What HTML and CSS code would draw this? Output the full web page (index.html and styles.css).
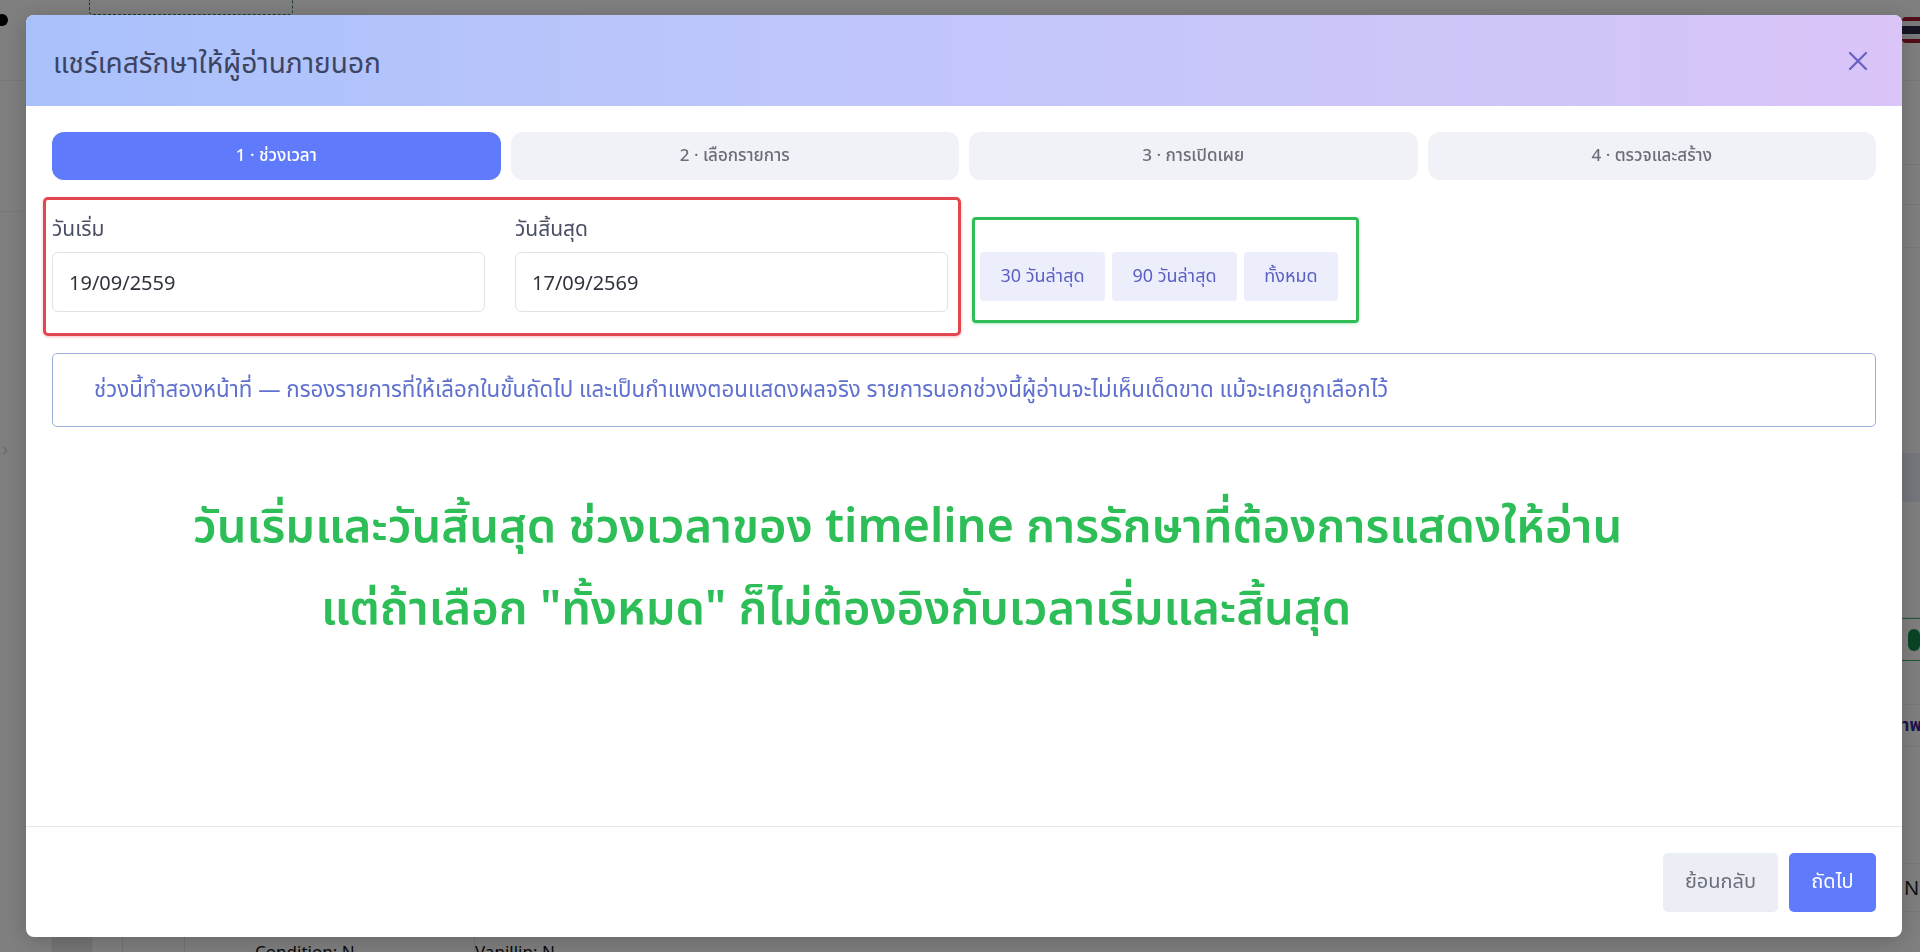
FILE: index.html
```html
<!DOCTYPE html>
<html lang="th">
<head>
<meta charset="utf-8">
<title>แชร์เคสรักษาให้ผู้อ่านภายนอก</title>
<link rel="stylesheet" href="styles.css">
</head>
<body>
<div class="page">
  <div class="page-top">
    <span class="dot"></span>
    <span class="dashed-box"></span>
    <span class="spacer"></span>
    <span class="flag"></span>
  </div>
  <div class="page-main">
    <div class="side-left">
      <span class="chev">›</span>
    </div>
    <div class="page-center"></div>
    <div class="side-right">
      <div class="r-row r1"></div>
      <div class="r-row r2"></div>
      <div class="r-row r3"></div>
      <div class="r-row r4"></div>
      <div class="r-row r5"><span class="g-icon"></span></div>
      <div class="r-gap r6"></div>
      <div class="r-row r7"><span class="p-text">าพ</span></div>
      <div class="r-gap r8"></div>
      <div class="r-row r9"><span class="n-text">N</span></div>
    </div>
  </div>
  <div class="page-bottom">
    <span class="cell c1"></span>
    <span class="cell c2"></span>
    <span class="cell c3"></span>
    <span class="cell c4"></span>
    <span class="cell c5">Condition: N</span>
    <span class="cell c6">Vanillin: N</span>
  </div>
</div>

<div class="overlay"></div>

<div class="modal">
  <div class="modal-header">
    <h1 class="modal-title">แชร์เคสรักษาให้ผู้อ่านภายนอก</h1>
    <button class="close-btn" aria-label="ปิด">
      <svg viewBox="0 0 20 20" width="20" height="20"><path d="M2 2 L18 18 M18 2 L2 18" stroke="#6a63c2" stroke-width="2.4" stroke-linecap="round" fill="none"/></svg>
    </button>
  </div>
  <div class="modal-body">
    <div class="steps">
      <div class="step active">1 · ช่วงเวลา</div>
      <div class="step">2 · เลือกรายการ</div>
      <div class="step">3 · การเปิดเผย</div>
      <div class="step">4 · ตรวจและสร้าง</div>
    </div>
    <div class="range-row">
      <div class="annot-red">
        <div class="field">
          <label class="field-label">วันเริ่ม</label>
          <div class="input">19/09/2559</div>
        </div>
        <div class="field">
          <label class="field-label">วันสิ้นสุด</label>
          <div class="input">17/09/2569</div>
        </div>
      </div>
      <div class="annot-green">
        <button class="quick">30 วันล่าสุด</button>
        <button class="quick">90 วันล่าสุด</button>
        <button class="quick q3">ทั้งหมด</button>
      </div>
    </div>
    <div class="info">ช่วงนี้ทำสองหน้าที่ — กรองรายการที่ให้เลือกในขั้นถัดไป และเป็นกำแพงตอนแสดงผลจริง รายการนอกช่วงนี้ผู้อ่านจะไม่เห็นเด็ดขาด แม้จะเคยถูกเลือกไว้</div>
    <div class="annot-text">
      <div class="line l1">วันเริ่มและวันสิ้นสุด ช่วงเวลาของ timeline การรักษาที่ต้องการแสดงให้อ่าน</div>
      <div class="line l2">แต่ถ้าเลือก "ทั้งหมด" ก็ไม่ต้องอิงกับเวลาเริ่มและสิ้นสุด</div>
    </div>
  </div>
  <div class="modal-footer">
    <button class="btn btn-back">ย้อนกลับ</button>
    <button class="btn btn-next">ถัดไป</button>
  </div>
</div>
</body>
</html>
```

FILE: styles.css
```css
* { box-sizing: border-box; }
html, body { margin: 0; padding: 0; }
body {
  width: 1920px;
  height: 952px;
  overflow: hidden;
  font-family: "Noto Sans", "Noto Sans Thai", "Noto Sans Thai UI", sans-serif;
  background: #fff;
}

/* ---------- background page (dimmed) ---------- */
.page { width: 1920px; height: 952px; display: flex; flex-direction: column; background: #fff; }
.page-top { height: 81px; display: flex; align-items: flex-start; border-bottom: 1px solid #f2f2f2; flex: none; }
.dot { width: 12px; height: 12px; border-radius: 50%; background: #000; margin: 14px 0 0 -4px; }
.dashed-box { width: 204px; height: 15px; margin-left: 81px; border: 1px dashed #3a7a50; border-top: 0; border-radius: 0 0 4px 4px; }
.spacer { flex: 1; }
.flag { width: 30px; height: 26px; margin: 17px -12px 0 0; border-radius: 4px;
  background: linear-gradient(#a51931 0 17%, #f4f5f8 17% 33%, #2d2a4a 33% 67%, #f4f5f8 67% 83%, #a51931 83%); }
.page-main { flex: 1; display: flex; }
.side-left { width: 60px; padding-top: 354px; background: linear-gradient(#fff 0 130px, #f3f3f3 130px 131px, #fff 131px); }
.chev { font-size: 20px; color: #d8d8d8; margin-left: 2px; }
.page-center { flex: 1; }
.side-right { width: 80px; display: flex; flex-direction: column; }
.r-row { border-bottom: 1px solid #f0f0f0; display: flex; align-items: center; flex: none; }
.r-gap { flex: none; }
.r1 { height: 84px; }
.r2 { height: 40px; }
.r3 { height: 43px; }
.r4 { height: 370px; background: linear-gradient(#fff 0 205px, #eceef8 205px 254px, #fff 254px); }
.r5 { height: 43px; border-top: 1px solid #3fae6a; border-bottom: 1px solid #3fae6a; }
.g-icon { width: 24px; height: 22px; border-radius: 6px; background: #128a4a; margin-left: 68px; }
.r6 { height: 43px; }
.r7 { height: 43px; border-top: 1px solid #eee; }
.p-text { color: #3a2a9a; font-weight: 700; font-size: 17px; margin-left: 62px; }
.r8 { height: 116px; }
.r9 { height: 49px; border-top: 1px solid #eee; }
.n-text { color: #222; font-size: 20px; margin-left: 64px; }
.page-bottom { height: 15px; display: flex; flex: none; }
.cell { height: 15px; border-right: 1px solid #e5e5e5; }
.c1 { width: 53px; }
.c2 { width: 39px; background: #ececec; }
.c3 { width: 31px; }
.c4 { width: 62px; }
.c5 { width: 290px; padding-left: 70px; font-size: 17px; line-height: 30px; color: #111; overflow: hidden; }
.c6 { width: 200px; font-size: 17px; line-height: 30px; color: #111; overflow: hidden; border: 0; }

.overlay { position: fixed; inset: 0; background: rgba(0, 0, 0, 0.5); }

/* ---------- modal ---------- */
.modal {
  position: fixed;
  left: 26px;
  top: 15px;
  width: 1876px;
  height: 922px;
  background: #fff;
  border-radius: 8px;
  overflow: hidden;
  display: flex;
  flex-direction: column;
  box-shadow: 0 4px 24px rgba(0,0,0,0.2);
}
.modal-header {
  height: 91px;
  flex: none;
  display: flex;
  align-items: center;
  justify-content: space-between;
  padding: 0 34px 0 27px;
  background: linear-gradient(90deg, #a9c1fb 0%, #bec6fb 40%, #cdc6f9 75%, #dac4f8 100%);
}
.modal-title { margin: 0; font-size: 28px; font-weight: 400; color: #3d4462; line-height: 1.2; padding-top: 4px; }
.close-btn { background: none; border: 0; padding: 0; width: 20px; height: 20px; display: flex; cursor: pointer; }

.modal-body { flex: 1; padding: 26px 26px 0; }
.steps { display: grid; grid-template-columns: repeat(4, 1fr); gap: 10px; }
.step {
  height: 48px;
  border-radius: 12px;
  background: #f1f2f8;
  color: #6b6e79;
  font-size: 17px;
  font-weight: 500;
  display: flex;
  align-items: center;
  justify-content: center;
}
.step.active { background: #5f7bfb; color: #fff; }

.range-row { display: flex; align-items: flex-start; margin-top: 17px; gap: 11px; }
.annot-red {
  margin-left: -9px;
  border: 3px solid #e2474d;
  border-radius: 5px;
  padding: 13px 10px 21px 6px;
  display: flex;
  gap: 30px;
  box-shadow: 0 1px 3px rgba(226,71,77,0.35);
}
.field { width: 433px; display: flex; flex-direction: column; }
.field-label { font-size: 21px; color: #4a4f66; line-height: 30px; margin-bottom: 9px; }
.input {
  height: 60px;
  border: 1px solid #dfe1e8;
  border-radius: 6px;
  padding: 0 16px;
  display: flex;
  align-items: center;
  font-size: 20px;
  color: #30333d;
}
.annot-green {
  margin-top: 20px;
  border: 3px solid #2fbd58;
  border-radius: 4px;
  padding: 32px 18px 19px 5px;
  display: flex;
  gap: 7px;
  box-shadow: 0 1px 3px rgba(47,189,88,0.35);
}
.quick {
  height: 49px;
  width: 125px;
  border: 0;
  border-radius: 4px;
  background: #eceefb;
  color: #5a5fc4;
  font-family: inherit;
  font-size: 18px;
  padding: 0;
}
.quick.q3 { width: 94px; }

.info {
  margin-top: 17px;
  height: 74px;
  border: 1px solid #9daedb;
  border-radius: 5px;
  padding: 0 0 0 41px;
  display: flex;
  align-items: center;
  font-size: 22.3px;
  color: #5f70cf;
  white-space: nowrap;
}

.annot-text { margin-top: 56px; color: #2dbe57; font-size: 47px; font-weight: 600; }
.line { line-height: 82px; white-space: nowrap; }
.l1 { margin-left: 141px; }
.l2 { margin-left: 269px; }

.modal-footer {
  height: 111px;
  flex: none;
  border-top: 1px solid #e7e8ee;
  display: flex;
  align-items: center;
  justify-content: flex-end;
  gap: 11px;
  padding-right: 26px;
}
.btn { height: 59px; border: 0; border-radius: 5px; font-family: inherit; font-size: 20px; cursor: pointer; padding: 0; }
.btn-back { width: 115px; background: #eceef5; color: #6b6e7a; }
.btn-next { width: 87px; background: #5f7bfb; color: #fff; }
```
